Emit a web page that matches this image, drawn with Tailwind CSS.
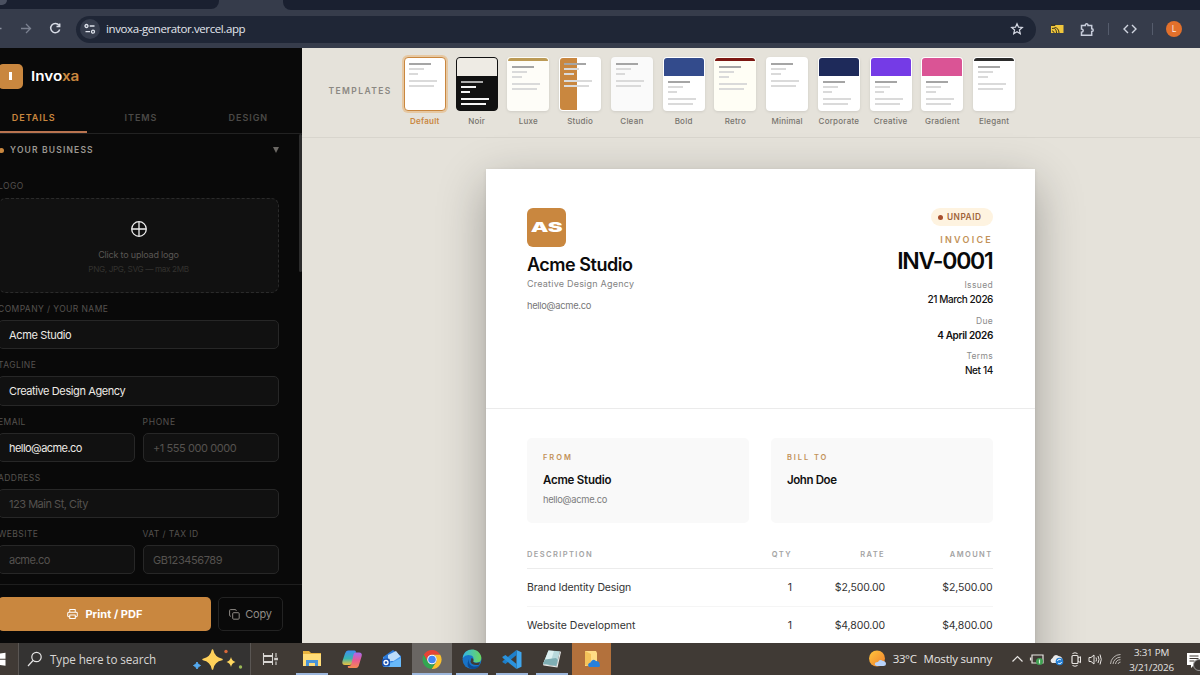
<!DOCTYPE html>
<html lang="en">
<head>
<meta charset="utf-8">
<title>Invoxa</title>
<script src="https://cdn.jsdelivr.net/npm/@tailwindcss/browser@4"></script>
</head>
<body class="w-[1200px] h-[675px] overflow-hidden flex flex-col font-['Inter',sans-serif] bg-[#e5e2da]">

<!-- Browser chrome -->
<header class="h-[48px] shrink-0 bg-[#363c4b] flex flex-col font-['Open_Sans',sans-serif]">
  <div class="h-[10px] shrink-0 flex justify-between bg-[#363c4b]">
    <div class="w-[219px] h-[9px] bg-[#1a2030] rounded-br-[8px]"><div class="w-[7px] h-[5px] bg-[#4a5060] rounded-br-full"></div></div>
    <div class="w-[917px] h-[10px] bg-[#1a2030] rounded-bl-[8px]"></div>
  </div>
  <div class="h-[38px] flex items-center">
    <svg class="w-[76px] h-[28px]" viewBox="0 0 76 28" fill="none" stroke-width="1.3"><path d="M0 13.500H1.500" stroke="#8b91a0"/><path d="M21 13.500H30M26 9l4.500 4.500L26 18" stroke="#7b8190"/><path d="M59 10.300A4.600 4.600 0 1 0 59.700 14.500M59.700 8.500V11.500H56.500" stroke="#d7dbe5" stroke-width="1.500"/></svg>
    <div class="w-[960px] h-[27px] rounded-full bg-[#1f2636] flex items-center pl-[4px] pr-[12px]">
      <div class="size-[20px] rounded-full bg-[#363d4d] flex items-center justify-center"><svg width="12" height="12" viewBox="0 0 12 12" fill="none" stroke="#dfe3ec" stroke-width="1.300"><circle cx="2.500" cy="3" r="1.500"/><path d="M5.700 3H10.500M1.500 8.700H6"/><circle cx="9" cy="8.700" r="1.500"/></svg></div>
      <span class="ml-[6px] text-[11.5px] leading-[16px] tracking-[-0.4px] text-[#e3e6ee]">invoxa-generator.vercel.app</span>
      <svg class="ml-auto" width="14" height="14" viewBox="0 0 14 14" fill="none" stroke="#d5d9e4" stroke-width="1.200"><path d="M7 1.700l1.500 3.500 3.800.3-2.900 2.500.9 3.700L7 9.700l-3.300 2 .9-3.700L1.700 5.500l3.800-.3z"/></svg>
    </div>
    <div class="flex items-center ml-[15px]">
      <svg width="13" height="10" viewBox="0 0 13 10"><path d="M0 1H12.500V9H0z" fill="#f0c63c"/><path d="M0 0h4v1.500H0zM1 4.500C4 3.500 5.500 6 5.500 9M3.500 3.500C6.500 3.500 8 6 8 9M1 7c1.500 0 2 1 2 2" stroke="#3b3420" fill="none"/></svg>
      <svg class="ml-[16px]" width="15" height="15" viewBox="0 0 15 15" fill="none" stroke="#c8cddb" stroke-width="1.500"><path d="M1.500 3.500H5.300C5 1.300 8.300 1.300 8 3.500h3.700v3.300c2 0 2 2.800 0 2.800v3.600H1.500V10.200c2.300-.3 2.300-3 0-3.200z"/></svg>
      <div class="ml-[13px] w-px h-[12px] bg-[#555c6c]"></div>
      <svg class="ml-[14px]" width="14" height="10" viewBox="0 0 14 10" fill="none" stroke="#d0d5e0" stroke-width="1.400"><path d="M5 1L1 5l4 4M9 1l4 4-4 4"/></svg>
      <div class="ml-[15px] w-px h-[12px] bg-[#555c6c]"></div>
      <div class="ml-[13px] size-[16px] rounded-full bg-[#e2702b] text-white/90 text-[8.5px] leading-[16px] text-center">L</div>
    </div>
  </div>
</header>

<div class="h-[595px] shrink-0 flex overflow-hidden">
  <!-- Editor sidebar -->
  <aside class="w-[322px] -ml-[20px] shrink-0 bg-[#090909] flex flex-col">
    <div class="h-[56px] pl-[18px] flex items-center">
      <div class="size-[25px] rounded-[5px] bg-[#c9873f] flex items-center justify-center"><div class="w-[3px] h-[8px] bg-white"></div></div>
      <div class="ml-[8px] text-[13.5px] font-semibold text-white scale-x-[1.13] origin-left">Invo<span class="text-[#c9873f]">xa</span></div>
    </div>
    <nav class="h-[29.5px] grid grid-cols-3 text-[9px] font-semibold tracking-[0.95px] text-center leading-[27px] border-b border-[#222] text-[#4b4947]">
      <div class="h-[29px] text-[#c9873f] border-b-2 border-[#b97450]">DETAILS</div><div>ITEMS</div><div>DESIGN</div>
    </nav>
    <div class="flex-1 flex">
      <div class="w-[299px] pl-[18px] flex flex-col">
        <div class="h-[32px] pt-[1px] flex items-center">
          <i class="size-[5px] rounded-full bg-[#c9873f] ml-[1px]"></i>
          <b class="ml-[6px] text-[8.5px] font-semibold tracking-[1.17px] text-[#9c9892]">YOUR BUSINESS</b>
          <i class="ml-auto border-x-[3px] border-x-transparent border-t-[6px] border-t-[#6b6864]"></i>
        </div>
        <div class="w-[281px] text-[8.5px] tracking-[0.42px] text-[#55524f]">
          <div class="h-[32.500px] pt-[14px] leading-[13px]">LOGO</div>
          <div class="h-[95px] border border-dashed border-[#2b2b2b] rounded-[8px] bg-[#111] flex flex-col items-center text-[9px] tracking-[-0.19px]">
            <svg class="mt-[21px]" width="18" height="18" viewBox="0 0 18 18" fill="none" stroke="#eee" stroke-width="1.300"><circle cx="9" cy="9" r="7.300"/><path d="M9 2V16M2 9H16"/></svg>
            <div class="mt-[10px] leading-[14px] text-[#5a5754]">Click to upload logo</div>
            <div class="leading-[15px] text-[8.200px] tracking-[-0.36px] text-[#33312f]">PNG, JPG, SVG — max 2MB</div>
          </div>
          <div class="h-[27px] pt-[9px] leading-[14px]">COMPANY / YOUR NAME</div>
          <div class="h-[29.250px] border border-[#272727] rounded-[5px] bg-[#111] pl-[10px] leading-[28px] text-[11px] tracking-[-0.35px] text-[#edeae5]">Acme Studio</div>
          <div class="h-[27px] pt-[9px] leading-[14px]">TAGLINE</div>
          <div class="h-[29.250px] border border-[#272727] rounded-[5px] bg-[#111] pl-[10px] leading-[28px] text-[11px] tracking-[-0.4px] text-[#edeae5]">Creative Design Agency</div>
          <div class="grid grid-cols-2 gap-x-[8px]">
            <div class="h-[27px] pt-[9px] leading-[14px]">EMAIL</div><div class="h-[27px] pt-[9px] leading-[14px] tracking-[0.7px]">PHONE</div>
            <div class="h-[29.250px] border border-[#272727] rounded-[5px] bg-[#111] pl-[10px] leading-[28px] text-[11px] tracking-[-0.55px] text-[#edeae5]">hello@acme.co</div>
            <div class="h-[29.250px] border border-[#272727] rounded-[5px] bg-[#111] pl-[9.500px] leading-[28px] text-[11px] tracking-[-0.42px] text-[#55524f]">+1 555 000 0000</div>
          </div>
          <div class="h-[27px] pt-[9px] leading-[14px]">ADDRESS</div>
          <div class="h-[29.250px] border border-[#272727] rounded-[5px] bg-[#111] pl-[10px] leading-[28px] text-[11px] tracking-[-0.48px] text-[#55524f]">123 Main St, City</div>
          <div class="grid grid-cols-2 gap-x-[8px]">
            <div class="h-[27px] pt-[9px] leading-[14px]">WEBSITE</div><div class="h-[27px] pt-[9px] leading-[14px]">VAT / TAX ID</div>
            <div class="h-[29.250px] border border-[#272727] rounded-[5px] bg-[#111] pl-[10px] leading-[28px] text-[11px] tracking-[-0.55px] text-[#55524f]">acme.co</div>
            <div class="h-[29.250px] border border-[#272727] rounded-[5px] bg-[#111] pl-[9.500px] leading-[28px] text-[11px] tracking-[-0.42px] text-[#55524f]">GB123456789</div>
          </div>
        </div>
      </div>
      <div class="ml-[20px] w-[3px] h-[138px] rounded-full bg-[#2c2c2c]"></div>
    </div>
    <footer class="h-[59.500px] shrink-0 border-t border-[#1e1e1e] flex gap-[7px] pt-[12.500px] pl-[18px]">
      <div class="w-[213px] h-[34px] rounded-[5px] bg-[#c9873f] flex items-center justify-center gap-[7px] text-white text-[11px] font-bold tracking-[0.05px] pl-[1px]">
        <svg width="11" height="12" viewBox="0 0 12 12" fill="none" stroke="#fff" stroke-width="1.100"><path d="M3 4V1h6v3M3 9H1.800A1 1 0 0 1 .8 8V5.200a1 1 0 0 1 1-1h8.400a1 1 0 0 1 1 1V8a1 1 0 0 1-1 1H9M3 7.200h6V11H3z" stroke-linejoin="round"/></svg>Print / PDF</div>
      <div class="w-[65px] h-[34px] rounded-[5px] border border-[#232323] flex items-center justify-center gap-[5px] text-[#8f8b86] text-[11px] tracking-[-0.25px]">
        <svg width="11" height="11" viewBox="0 0 11 11" fill="none" stroke="#8f8b86"><rect x="3.700" y="3.700" width="6.500" height="6.500" rx="1"/><path d="M2 7.200H1.500a.9.900 0 0 1-.9-.9V1.500A.9.900 0 0 1 1.500.6H6.300a.9.900 0 0 1 .9.900V2"/></svg>Copy</div>
    </footer>
  </aside>

  <main class="flex-1 flex flex-col overflow-hidden">
    <!-- Template picker -->
    <div class="h-[90px] shrink-0 border-b border-[#d8d5cd] flex pl-[26.5px] pt-[9px]">
      <div class="w-[70.500px] shrink-0 pt-[28px] text-[8.5px] leading-[13px] font-semibold tracking-[1.4px] text-[#8b8882]">TEMPLATES</div>
      <div id="templates" class="flex"></div>
    </div>

    <!-- Invoice preview -->
    <div class="flex-1 pt-[31px] pl-[183.5px]">
      <article class="w-[549.500px] h-[700px] bg-white text-[#111] shadow-[0_15px_45px_rgba(0,0,0,0.30),0_1px_4px_rgba(0,0,0,0.08)]">
        <div class="h-[240px] border-b border-[#ebebeb] pl-[41.500px] pr-[42px] pt-[39px] flex justify-between">
          <div>
            <div class="size-[39px] rounded-[6px] bg-[#c9873f] text-white flex items-center justify-center"><span class="text-[13.5px] font-black scale-x-[1.65]">AS</span></div>
            <div class="mt-[5.500px] text-[18px] leading-[24px] font-semibold tracking-[-0.48px] text-[#0c0c0c]">Acme Studio</div>
            <div class="mt-[0.500px] text-[9px] leading-[13px] tracking-[0.22px] text-[#828282]">Creative Design Agency</div>
            <div class="mt-[9px] text-[9.3px] leading-[13px] text-[#777] tracking-[-0.28px]">hello@acme.co</div>
          </div>
          <div class="flex flex-col items-end">
            <div class="w-[62px] h-[18px] rounded-full bg-[#fef3e0] flex items-center pl-[7px] text-[8.3px] font-semibold tracking-[0.5px] text-[#a0643a]"><i class="size-[5px] rounded-full bg-[#a84f2c] mr-[4px]"></i>UNPAID</div>
            <div class="mt-[6.500px] text-[9px] leading-[13px] font-semibold tracking-[2.25px] text-[#c29258]">INVOICE</div>
            <div class="mt-[1.500px] text-[23px] leading-[28px] font-semibold tracking-[-1.25px] text-[#0a0a0a] mr-[0.500px]">INV-0001</div>
            <div class="mt-[4px] text-[8.500px] leading-[13px] tracking-[0.35px] text-[#8b8b8b]">Issued</div>
            <div class="text-[10px] leading-[14px] font-medium tracking-[-0.42px]">21 March 2026</div>
            <div class="mt-[8.500px] text-[8.500px] leading-[13px] tracking-[0.3px] text-[#8b8b8b]">Due</div>
            <div class="text-[10px] leading-[14px] font-semibold tracking-[-0.35px]">4 April 2026</div>
            <div class="mt-[8.500px] text-[8.500px] leading-[13px] tracking-[0.3px] text-[#8b8b8b]">Terms</div>
            <div class="text-[10px] leading-[14px] font-medium tracking-[-0.35px]">Net 14</div>
          </div>
        </div>
        <div class="pl-[41.500px] pr-[42px] pt-[29px]">
          <div class="grid grid-cols-2 gap-[22px]">
            <div class="h-[85px] rounded-[5px] bg-[#f9f9f9] pl-[16px] pt-[13.500px]">
              <div class="text-[7.500px] leading-[12px] font-semibold tracking-[1.95px] text-[#c29258]">FROM</div>
              <div class="mt-[8.500px] text-[11.5px] leading-[16px] font-semibold tracking-[-0.22px]">Acme Studio</div>
              <div class="mt-[5px] text-[9.3px] leading-[14px] tracking-[-0.28px] text-[#7d7d7d]">hello@acme.co</div>
            </div>
            <div class="h-[85px] rounded-[5px] bg-[#f9f9f9] pl-[16px] pt-[13.500px]">
              <div class="text-[7.500px] leading-[12px] font-semibold tracking-[1.9px] text-[#c29258]">BILL TO</div>
              <div class="mt-[8.500px] text-[11.5px] leading-[16px] font-semibold tracking-[-0.4px]">John Doe</div>
            </div>
          </div>
          <div class="mt-[22px] grid grid-cols-[200px_65px_93px_107.500px] text-right">
            <div class="col-span-4 grid grid-cols-subgrid h-[24px] leading-[20px] text-[7.500px] font-semibold tracking-[1.4px] text-[#a3a3a3] border-b border-[#ececec]"><span class="text-left">DESCRIPTION</span><span>QTY</span><span>RATE</span><span>AMOUNT</span></div>
            <div class="col-span-4 grid grid-cols-subgrid h-[37.500px] leading-[37px] text-[10.5px] tracking-[-0.13px] text-[#333] border-b border-[#f5f5f5]"><span class="text-left">Brand Identity Design</span><span>1</span><span>$2,500.00</span><span>$2,500.00</span></div>
            <div class="col-span-4 grid grid-cols-subgrid h-[37.500px] leading-[37px] text-[10.5px] tracking-[-0.13px] text-[#333] border-b border-[#f5f5f5]"><span class="text-left tracking-[0]">Website Development</span><span>1</span><span>$4,800.00</span><span>$4,800.00</span></div>
          </div>
        </div>
      </article>
    </div>
  </main>
</div>

<!-- Taskbar -->
<footer class="h-[32px] shrink-0 bg-[#403a35] flex items-center font-['Open_Sans',sans-serif] text-[#e6e4e2]">
  <svg class="w-[18px] h-[32px]" viewBox="0 0 18 32" fill="#fff"><path d="M0 10.500l5.500-.7v6H0zM0 16.700h5.500v6L0 22z"/></svg>
  <div class="w-[233px] h-full bg-[#343332] border-x border-[#5a5653] flex items-center pl-[8px]">
    <svg width="16" height="16" viewBox="0 0 16 16" fill="none" stroke="#e5e5e5" stroke-width="1.200"><circle cx="9.500" cy="6" r="4.700"/><path d="M6 9.500L1 15"/></svg>
    <span class="ml-[7px] text-[11.700px] leading-[16px] tracking-[-0.08px] text-[#d8d6d4]">Type here to search</span>
    <svg class="ml-auto mr-[6px]" width="52" height="26" viewBox="0 0 52 26"><path d="M20.500 4q1.500 8 9.500 9.500-8 1.500-9.500 9.500-1.500-8-9.500-9.500 8-1.500 9.500-9.500z" fill="#ffd15a" stroke="#ffd15a" stroke-width="1.500" stroke-linejoin="round"/><path d="M39 11q.8 4 4.500 5-3.700 1-4.500 5-.8-4-4.500-5 3.700-1 4.500-5z" fill="#ffd760"/><path d="M5 16q.8 3 3.500 3.500-2.700.8-3.500 3.500-.8-2.700-3.500-3.500Q4.200 19 5 16z" fill="#55aaf0" stroke="#55aaf0"/><circle cx="34" cy="5.500" r="1.700" fill="#d9683a"/><circle cx="48.500" cy="21" r="1.700" fill="#9ab857"/></svg>
  </div>
  <svg class="w-[41px] h-[32px]" viewBox="0 0 41 32" fill="none" stroke="#d8d5d2" stroke-width="1.100"><path d="M12.500 10v2.500h9V10M12.500 22v-2.500h9V22M12.500 13.500h9v5h-9zM25 10v4M25 18.500V22"/><path d="M23.800 15.200h2.500v1.500h-2.500z" fill="#ddd"/></svg>
  <div class="h-full flex">
    <div class="w-[40px] h-full flex flex-col items-center"><svg class="h-[30px] w-[22px]" viewBox="0 0 22 30"><path d="M2 8h6l2 2h10v12H2z" fill="#e8b33e"/><path d="M2 11h18v12H2z" fill="#ffdc78"/><path d="M5 23v-6h12v6h-3v-3H8v3z" fill="#4a94d8"/></svg><i class="w-[32px] h-[2px] bg-[#9db7dc]"></i></div>
    <div class="w-[40px] h-full flex flex-col items-center"><svg class="h-[30px] w-[22px]" viewBox="0 0 22 30"><defs><linearGradient id="ca" x1="0" y1="0" x2="0" y2="1"><stop stop-color="#3f8df0"/><stop offset=".55" stop-color="#37b5b0"/><stop offset="1" stop-color="#f0c13c"/></linearGradient><linearGradient id="cb" x1="0" y1="0" x2="0" y2="1"><stop stop-color="#a76af0"/><stop offset=".5" stop-color="#e85b92"/><stop offset="1" stop-color="#f58a50"/></linearGradient></defs><path d="M7 7.500h6.500q1.800 0 1.300 2L11.500 19.500q-.8 2.500-3 2.500H4q-3.500 0-2.500-4l2.500-7.500Q5 7.500 7 7.500z" fill="url(#ca)"/><path d="M12.500 11.500q.6-2 2-2H18q3.500 0 2.700 3.500L18.300 21q-.8 4-3.300 4H8.500q-2.200 0-1.600-2H8q1.800 0 2.400-2z" fill="url(#cb)"/></svg></div>
    <div class="w-[40px] h-full flex flex-col items-center"><svg class="h-[30px] w-[22px]" viewBox="0 0 22 30"><path d="M2 14L12 7l8 6v10q0 1-1 1H4q-2 0-2-2z" fill="#2b79d8"/><path d="M7 12l8-4 4 5v5H7z" fill="#bcdcfa"/><path d="M2 14l9 5 9-6v10q0 1-1 1H4q-2 0-2-2z" fill="#4a9bf0"/><path d="M2 24l18-9v8q0 1-1 1z" fill="#69bafa"/><rect x="1" y="15.500" width="8" height="8" rx="2" fill="#174fae"/><circle cx="5" cy="19.500" r="2" fill="none" stroke="#fff" stroke-width="1.300"/></svg></div>
    <div class="w-[40px] h-full flex flex-col items-center bg-[#6a6663]"><svg class="h-[30px] w-[22px]" viewBox="0 0 22 30"><path d="M2.800 11.700A9.500 9.500 0 0 1 19.200 11.700H11a4.800 4.800 0 0 0-4.200 7.200z" fill="#e54335"/><path d="M19.200 11.700A9.500 9.500 0 0 1 10.500 26L15.200 18.900A4.800 4.800 0 0 0 11 11.700z" fill="#f9c02f"/><path d="M2.800 11.700A9.500 9.500 0 0 0 10.500 26L15.200 18.900a4.800 4.800 0 0 1-8.400 0z" fill="#32a650"/><circle cx="11" cy="16.500" r="4.800" fill="#fff"/><circle cx="11" cy="16.500" r="3.800" fill="#4285f4"/></svg><i class="w-full h-[2px] bg-[#9db7dc]"></i></div>
    <div class="w-[40px] h-full flex flex-col items-center"><svg class="h-[30px] w-[22px]" viewBox="0 0 22 30"><defs><linearGradient id="ea"><stop stop-color="#31b5e8"/><stop offset="1" stop-color="#6bd85c"/></linearGradient></defs><circle cx="11" cy="16.500" r="9.500" fill="#1873c8"/><path d="M1.700 15C3 4 18 4 20.300 14q.7 6-6 5.500-3 0-2-2.500 1-3-2-4.500Q5 10.500 1.700 15z" fill="url(#ea)"/><path d="M8 16q-1 6 4.500 7.500 3.500.5 6.500-1.500-2.500 4.500-8 4Q4 24.500 8 16z" fill="#0d4c95"/><path d="M10.500 15q3 1 1.700 3.500 1 2.500 6.800.8l-1 2.500q-8 1-8.500-3.300z" fill="#403a35"/></svg><i class="w-[32px] h-[2px] bg-[#9db7dc]"></i></div>
    <div class="w-[40px] h-full flex flex-col items-center"><svg class="h-[30px] w-[22px]" viewBox="0 0 22 30"><path d="M15.500 7L20.500 9.300V23.700L15.500 26z" fill="#3fa6ee"/><path d="M15.500 7v5L4.500 21 1.500 19.300v-1z" fill="#1e7fcb"/><path d="M15.500 26v-5L4.500 12 1.500 13.700v1z" fill="#2a92dd"/></svg><i class="w-[32px] h-[2px] bg-[#9db7dc]"></i></div>
    <div class="w-[40px] h-full flex flex-col items-center"><svg class="h-[30px] w-[22px]" viewBox="0 0 22 30"><path d="M7.500 7.500l11.500.8-3.500 15-13.500-2z" fill="#b9d9dc"/><path d="M7.500 7.500l5.500.4-4.500 14.400-6.500-1z" fill="#dcf0f1"/><path d="M4 16.500l11-1.500 2 2-1.500 6-13.500-2z" fill="#7faeb4"/><path d="M2 21.300l13.500 2L19 8.300l1 .7-3.500 15.500-14-2z" fill="#e8e8e8"/></svg><i class="w-[32px] h-[2px] bg-[#9db7dc]"></i></div>
    <div class="w-[39px] h-full flex flex-col items-center bg-[#b3713c]"><svg class="h-[30px] w-[22px]" viewBox="0 0 22 30"><path d="M4 8h11l1 2v13H4z" fill="#ffdc85"/><path d="M4 8l6 3v13l-6-2z" fill="#f4c25a"/><path d="M8 24q-2.500-3 1.500-4.500 2-4.500 5.500-1.500 3.500 0 3.500 3 1.500 2.500-1 3z" fill="#2580dc"/></svg></div>
  </div>
  <div class="ml-auto flex items-center h-full">
    <svg width="20" height="20" viewBox="0 0 20 20"><defs><linearGradient id="su" x1="0" y1="0" x2="1" y2="1"><stop stop-color="#ffc73d"/><stop offset="1" stop-color="#ef7d2c"/></linearGradient></defs><circle cx="9" cy="9.500" r="8" fill="url(#su)"/><path d="M9 17q-3.500-.7-1.500-3.500 2-.8 2.500-.5 1.500-3.500 5-1 3 .3 3 3 0 2-2.500 2z" fill="#b9d3fa"/></svg>
    <span class="ml-[5px] text-[11.500px] leading-[16px] tracking-[-0.4px]">33°C</span>
    <span class="ml-[7px] text-[11.500px] leading-[16px] tracking-[-0.2px]">Mostly sunny</span>
    <svg class="ml-[18.500px]" width="112" height="20" viewBox="0 0 112 20" fill="none" stroke="#e8e5e2" stroke-width="1.200"><path d="M1.500 12.500l5-5 5 5"/><path d="M21 6h11v8H21zM19.500 8.500v3"/><path d="M22.500 7.500h6v5h-6z" fill="#403a35" stroke="none"/><circle cx="28.500" cy="12.500" r="3.500" fill="#40a052" stroke="none"/><path d="M28.500 10.500v4" stroke="#d4f3d8"/><path d="M41 14q-3-2.500.5-5 2-4.500 6-2 4.500.5 4 5l-1 2z" fill="#e9e9e9" stroke="none"/><circle cx="48.500" cy="12.500" r="3.800" fill="#2680d5" stroke="none"/><path d="M46.500 12a2 2 0 0 1 3.500-1M50.500 13a2 2 0 0 1-3.500 1" stroke="#fff" stroke-width=".9"/><rect x="61" y="6.500" width="6" height="8" rx="1"/><path d="M67 9l2.500-1.300v6L67 12M61.500 4.500q2.500-1.500 5 0M61.500 16.500q2.500 1.500 5 0" stroke-width="1"/><path d="M78 8.500h2L83 6v9l-3-2.500h-2zM85 8.500q1 2 0 4M87 7q2 3.500 0 7M89 5.500q2.500 5 0 10" stroke-width="1"/><path d="M99.500 15a10 10 0 0 1 10-9.500M102 15a7.500 7.500 0 0 1 7.500-6.800M104.500 15a5 5 0 0 1 5-4.300M107 15a2.500 2.500 0 0 1 2.500-1.900" stroke="#bcb8b4" stroke-width="1"/></svg>
    <div class="ml-[4.500px] w-[49px] text-center text-[9.800px] leading-[15px] tracking-[-0.2px] whitespace-nowrap pt-[1px]">3:31 PM<br>3/21/2026</div>
    <svg class="ml-[6px]" width="18" height="32" viewBox="0 0 18 32"><path d="M5 10h13v12h-6l-3 3v-3H5z" fill="#fff"/><path d="M7.500 13h9M7.500 15.500h9M7.500 18h5" stroke="#403a35"/><circle cx="17" cy="22" r="5.500" fill="#3b3734" stroke="#999"/></svg>
  </div>
</footer>

<script>
// kind: plain | head (tall block) | bar (thin strip) | split (half-width block)
const templates = [
  ['Default', 'plain', '', 'bg-white'],
  ['Noir', 'head', 'bg-[#eeebe4]', 'bg-[#111]'],
  ['Luxe', 'bar', 'bg-[#bb9a55]', 'bg-[#fefdf8]'],
  ['Studio', 'split', 'bg-[#c9873f]', 'bg-white'],
  ['Clean', 'plain', '', 'bg-[#fafafa]'],
  ['Bold', 'head', 'bg-[#334b8c]', 'bg-white'],
  ['Retro', 'bar', 'bg-[#7c1712]', 'bg-[#fffef5]'],
  ['Minimal', 'plain', '', 'bg-white'],
  ['Corporate', 'head', 'bg-[#1e2a5a]', 'bg-white'],
  ['Creative', 'head', 'bg-[#753be6]', 'bg-white'],
  ['Gradient', 'head', 'bg-[#da5495]', 'bg-white'],
  ['Elegant', 'bar', 'bg-[#2b2b2b]', 'bg-white']
];
const block = { plain: 'h-0', head: 'h-[18px]', bar: 'h-[3px]', split: 'h-0' };
document.getElementById('templates').innerHTML = templates.map(([name, kind, color, bg]) => {
  const dark = name === 'Noir', on = name === 'Default';
  const edge = on ? 'border-[#c9873f] shadow-[0_0_0_2px_#e6c8a2]' : dark ? 'border-[#111]' : 'border-transparent shadow-[0_1px_3px_rgba(0,0,0,0.1)]';
  const strong = dark ? 'bg-[#aaa]' : 'bg-[#a5a5a5]', soft = dark ? 'bg-[#f4f4f4]' : 'bg-[#dadada]';
  const split = kind === 'split' ? `<div class="absolute left-0 top-0 w-[17px] h-full ${color}"></div>` : '';
  return `<div class="w-[51.75px] flex flex-col items-center">
    <div class="relative w-[42px] h-[54px] rounded-[4px] overflow-hidden border-[1.5px] ${edge} ${bg}">${split}
      <div class="${block[kind]} ${color}"></div>
      <div class="relative pl-[4px] pt-[5px]">
        <div class="h-[2px] w-[22px] ${strong}"></div>
        <div class="h-[2px] w-[15px] mt-[3px] ${soft}"></div>
        <div class="h-[2px] w-[9.5px] mt-[3px] ${soft}"></div>
        <div class="h-[2px] w-[28px] mt-[5px] ${soft}"></div>
        <div class="h-[2px] w-[25px] mt-[3px] ${soft}"></div>
      </div>
    </div>
    <div class="mt-[4.5px] text-[8px] leading-[11px] tracking-[0.23px] whitespace-nowrap ${on ? 'text-[#c9873f] font-semibold' : 'text-[#77746e] font-medium'}">${name}</div>
  </div>`;
}).join('');
</script>
</body>
</html>
